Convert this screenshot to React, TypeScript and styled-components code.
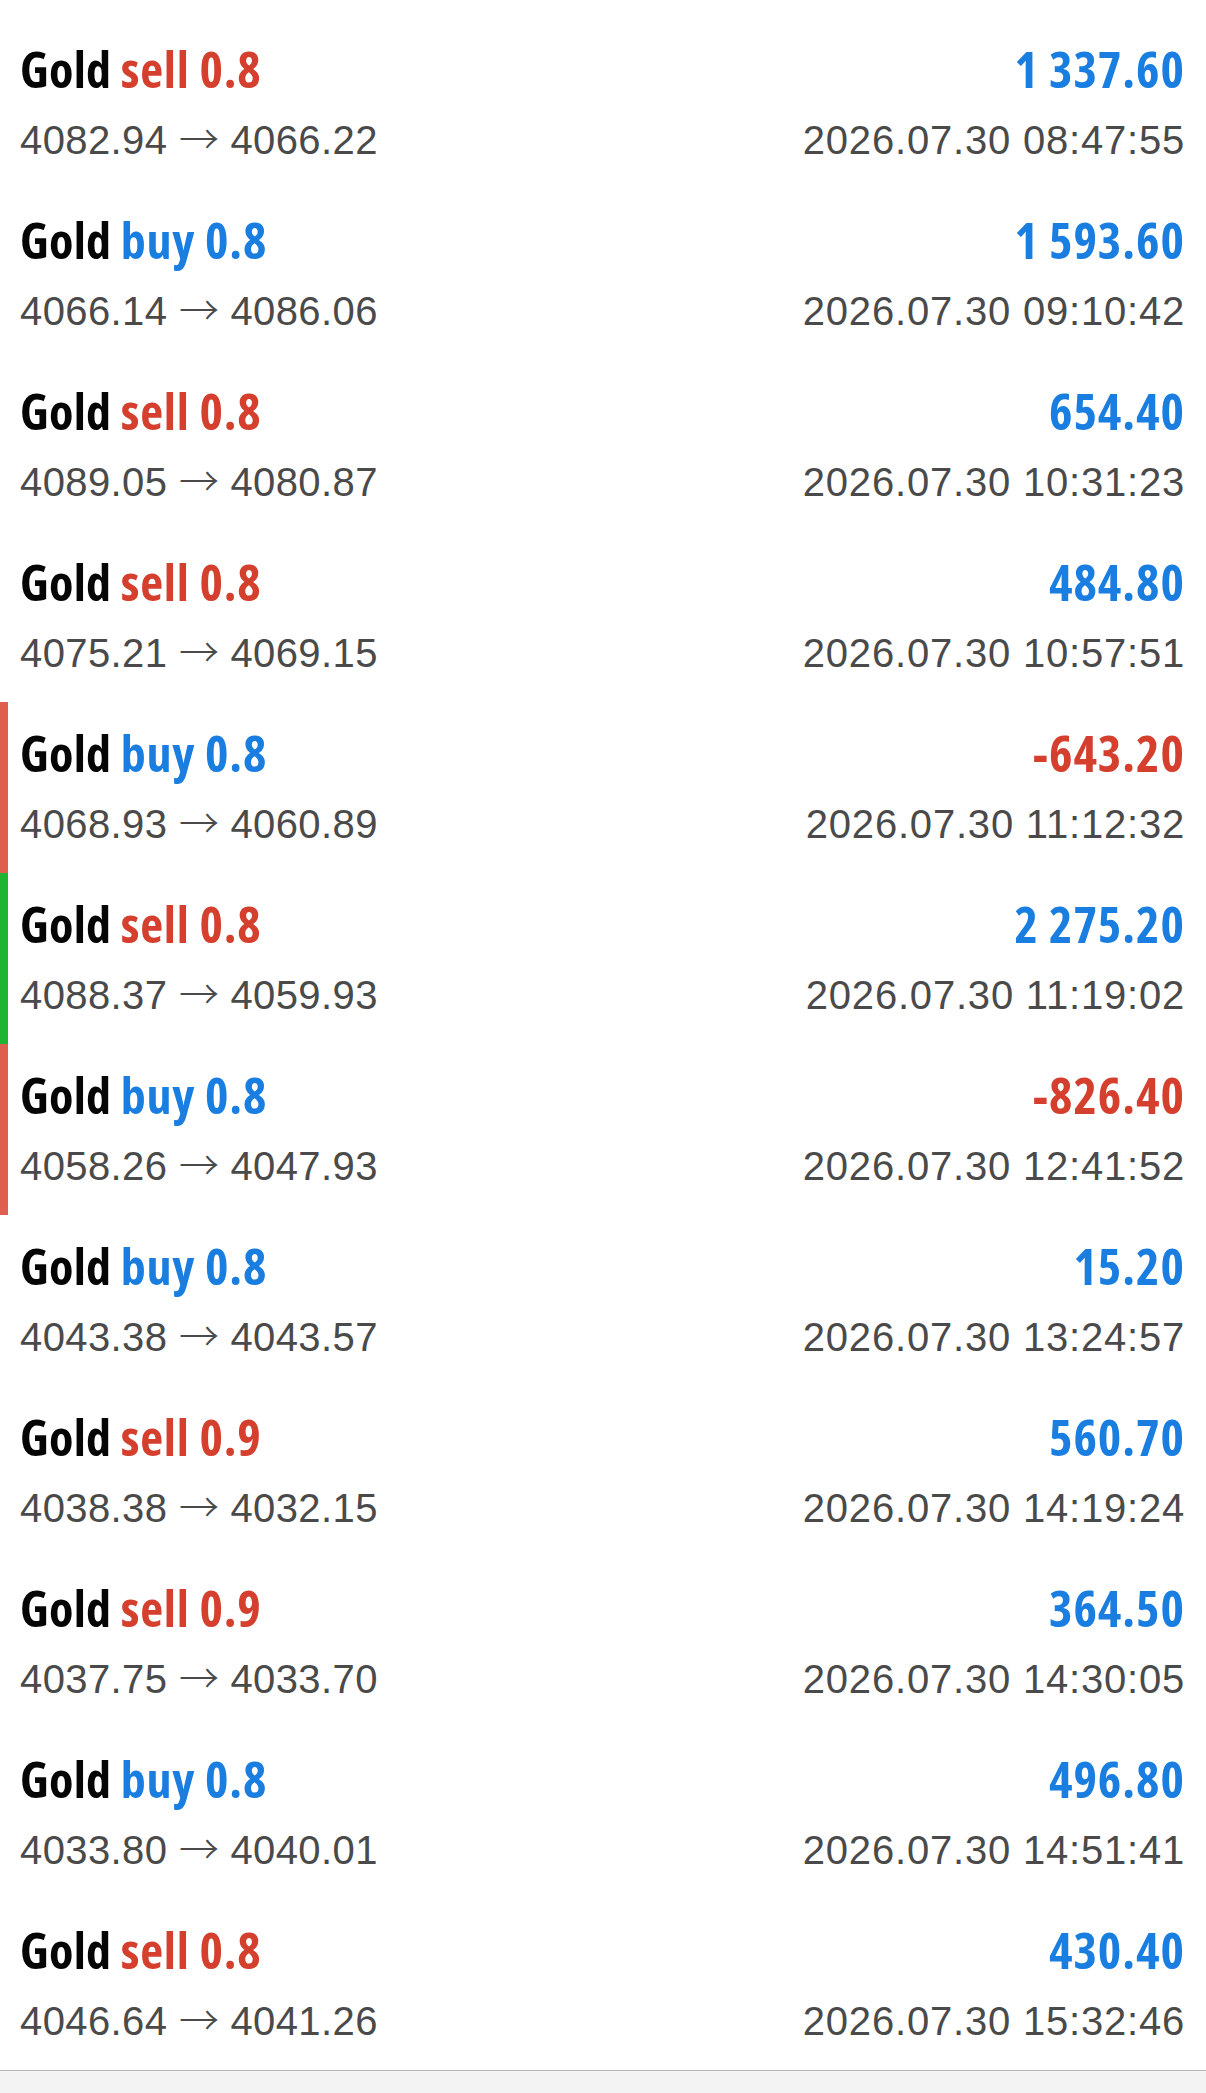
import React from "react";
import styled, { createGlobalStyle } from "styled-components";

const GlobalStyle = createGlobalStyle`
  html, body {
    margin: 0;
    padding: 0;
    background: #ffffff;
  }
  body {
    font-family: "Liberation Sans", Arial, sans-serif;
  }
`;

type Side = "buy" | "sell";
type Flag = "loss" | "win" | undefined;

interface Trade {
  side: Side;
  vol: string;
  open: string;
  close: string;
  profit: string;
  time: string;
  flag?: Flag;
}

const trades: Trade[] = [
  { side: "sell", vol: "0.8", open: "4082.94", close: "4066.22", profit: "1 337.60", time: "2026.07.30 08:47:55" },
  { side: "buy", vol: "0.8", open: "4066.14", close: "4086.06", profit: "1 593.60", time: "2026.07.30 09:10:42" },
  { side: "sell", vol: "0.8", open: "4089.05", close: "4080.87", profit: "654.40", time: "2026.07.30 10:31:23" },
  { side: "sell", vol: "0.8", open: "4075.21", close: "4069.15", profit: "484.80", time: "2026.07.30 10:57:51" },
  { side: "buy", vol: "0.8", open: "4068.93", close: "4060.89", profit: "-643.20", time: "2026.07.30 11:12:32", flag: "loss" },
  { side: "sell", vol: "0.8", open: "4088.37", close: "4059.93", profit: "2 275.20", time: "2026.07.30 11:19:02", flag: "win" },
  { side: "buy", vol: "0.8", open: "4058.26", close: "4047.93", profit: "-826.40", time: "2026.07.30 12:41:52", flag: "loss" },
  { side: "buy", vol: "0.8", open: "4043.38", close: "4043.57", profit: "15.20", time: "2026.07.30 13:24:57" },
  { side: "sell", vol: "0.9", open: "4038.38", close: "4032.15", profit: "560.70", time: "2026.07.30 14:19:24" },
  { side: "sell", vol: "0.9", open: "4037.75", close: "4033.70", profit: "364.50", time: "2026.07.30 14:30:05" },
  { side: "buy", vol: "0.8", open: "4033.80", close: "4040.01", profit: "496.80", time: "2026.07.30 14:51:41" },
  { side: "sell", vol: "0.8", open: "4046.64", close: "4041.26", profit: "430.40", time: "2026.07.30 15:32:46" },
];

const BLUE = "#1a7ee0";
const RED = "#d43f2e";

const Page = styled.div`
  min-height: 100vh;
  display: flex;
  flex-direction: column;
  background: #ffffff;
  padding-top: 18px;
  box-sizing: border-box;
`;

const List = styled.div`
  display: flex;
  flex-direction: column;
`;

const Row = styled.div<{ $flag?: Flag }>`
  height: 171px;
  box-sizing: border-box;
  padding: 26px 21px 0 20px;
  display: grid;
  grid-template-columns: 1fr auto;
  grid-template-rows: 50px 40px;
  row-gap: 26px;
  box-shadow: ${(p) =>
    p.$flag === "loss"
      ? "inset 8px 0 0 #de5f4f"
      : p.$flag === "win"
      ? "inset 8px 0 0 #1fb432"
      : "none"};
`;

const Title = styled.div`
  font-family: "Open Sans", "DejaVu Sans Condensed", sans-serif;
  font-stretch: 75%;
  font-weight: 700;
  font-size: 50px;
  line-height: 50px;
  letter-spacing: 0.3px;
  color: #050505;
  white-space: nowrap;
`;

const SideText = styled.span<{ $side: Side }>`
  color: ${(p) => (p.$side === "buy" ? BLUE : RED)};
  letter-spacing: 0.8px;
`;

const Profit = styled.div<{ $negative: boolean }>`
  font-family: "Open Sans", "DejaVu Sans Condensed", sans-serif;
  font-stretch: 75%;
  font-weight: 700;
  font-size: 50px;
  line-height: 50px;
  letter-spacing: 1px;
  color: ${(p) => (p.$negative ? RED : BLUE)};
  text-align: right;
  white-space: nowrap;
`;

const Prices = styled.div`
  font-family: "Liberation Sans", Arial, sans-serif;
  font-size: 40px;
  line-height: 40px;
  letter-spacing: 0.4px;
  color: #4a4a4a;
  white-space: nowrap;
`;

const Arrow = styled.span`
  font-family: "Noto Sans CJK SC", "DejaVu Sans", sans-serif;
  font-weight: 300;
  font-size: 40px;
  line-height: 0;
  letter-spacing: 0;
`;

const Time = styled(Prices)`
  text-align: right;
  letter-spacing: 0.8px;
`;

const Footer = styled.div`
  flex: 1;
  border-top: 1px solid #b9b9b9;
  background: #f3f3f3;
`;

export default function App() {
  return (
    <>
      <GlobalStyle />
      <Page>
        <List>
          {trades.map((t, i) => (
            <Row key={i} $flag={t.flag}>
              <Title>
                Gold <SideText $side={t.side}>{t.side} {t.vol}</SideText>
              </Title>
              <Profit $negative={t.profit.startsWith("-")}>{t.profit}</Profit>
              <Prices>
                {t.open} <Arrow>→</Arrow> {t.close}
              </Prices>
              <Time>{t.time}</Time>
            </Row>
          ))}
        </List>
        <Footer />
      </Page>
    </>
  );
}
